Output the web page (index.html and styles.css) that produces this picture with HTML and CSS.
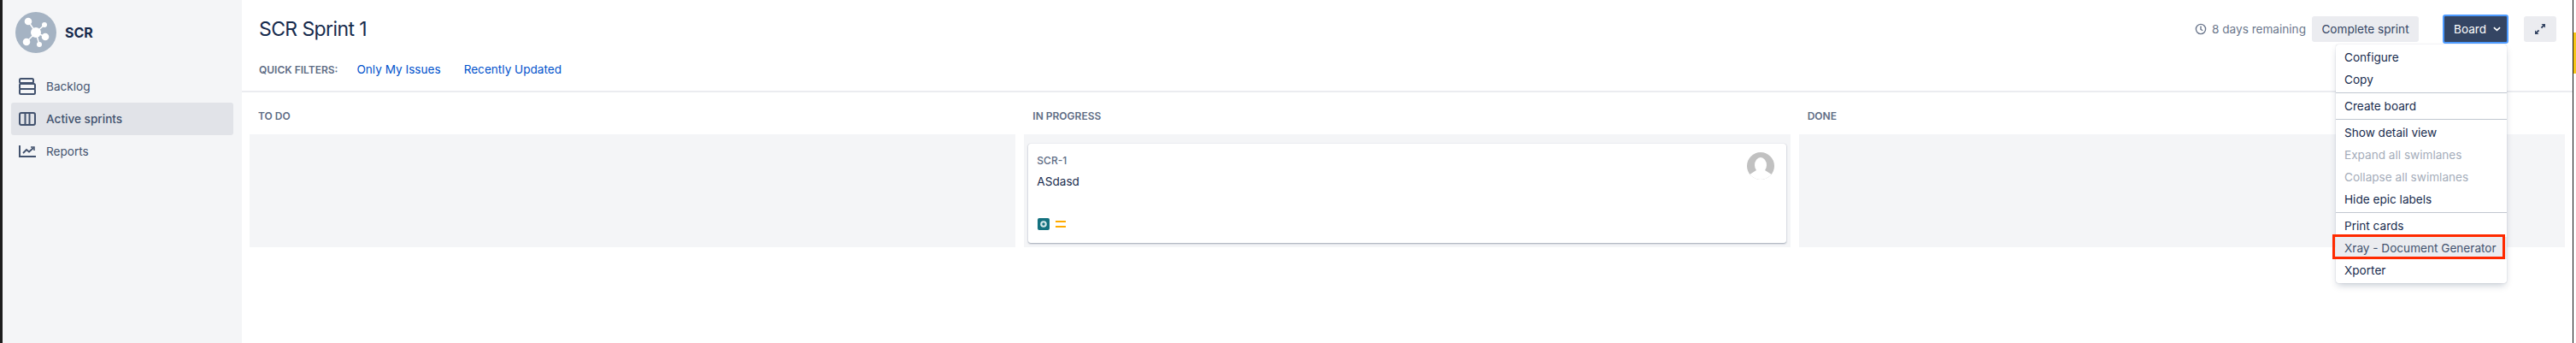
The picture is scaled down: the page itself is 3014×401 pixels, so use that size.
FILE: index.html
```html
<!DOCTYPE html>
<html lang="en">
<head>
    <meta charset="UTF-8">
    <title>SCR Sprint 1</title>
    <link rel="stylesheet" href="styles.css">
</head>
<body>
    <div class="edge-left"></div>

    <div class="sidebar">
        <div class="project">
            <svg class="project-avatar" viewBox="0 0 48 48">
                <circle cx="24" cy="24" r="24" fill="#a5b3c3"/>
                <g stroke="#fff" stroke-width="1.5">
                    <line x1="24" y1="24" x2="15" y2="11"/>
                    <line x1="24" y1="24" x2="34" y2="15"/>
                    <line x1="24" y1="24" x2="35" y2="29"/>
                    <line x1="24" y1="24" x2="13" y2="35"/>
                    <line x1="24" y1="24" x2="28" y2="38"/>
                </g>
                <g fill="#fff">
                    <circle cx="24" cy="24" r="6"/>
                    <circle cx="15" cy="11" r="4.3"/>
                    <circle cx="34" cy="15" r="3"/>
                    <circle cx="35" cy="29" r="4.3"/>
                    <circle cx="13" cy="35" r="4.3"/>
                    <circle cx="28" cy="38" r="3"/>
                </g>
            </svg>
            <span class="project-name">SCR</span>
        </div>
        <div class="nav">
            <div class="nav-item">
                <svg class="nav-icon" viewBox="0 0 20 20" fill="none" stroke="#42526e" stroke-width="2">
                    <rect x="1" y="1" width="16" height="5" rx="1.5"/>
                    <rect x="1" y="7" width="18" height="6" rx="1.5"/>
                    <rect x="1" y="13" width="18" height="6" rx="1.5"/>
                </svg>
                Backlog
            </div>
            <div class="nav-item active">
                <svg class="nav-icon" viewBox="0 0 20 20" fill="none" stroke="#42526e" stroke-width="2">
                    <rect x="1" y="3" width="18" height="14" rx="2"/>
                    <line x1="7.500" y1="3" x2="7.500" y2="17"/>
                    <line x1="12.500" y1="3" x2="12.500" y2="17"/>
                </svg>
                Active sprints
            </div>
            <div class="nav-item">
                <svg class="nav-icon" viewBox="0 0 20 20" fill="none" stroke="#42526e" stroke-width="2">
                    <path d="M1 3v13h19"/>
                    <path d="M5 12l4-4 3 2.500 5-4.500" stroke-width="1.800"/>
                    <path d="M14 5h4v4" stroke-width="1.500"/>
                </svg>
                Reports
            </div>
        </div>
    </div>

    <div class="main">
        <div class="header">
            <div class="header-top">
                <h1 class="title">SCR Sprint 1</h1>
                <div class="tools">
                    <svg class="clock" viewBox="0 0 16 16" fill="none" stroke="#6b778c" stroke-width="1.600">
                        <circle cx="8" cy="8" r="6.400"/>
                        <path d="M8 4v4.300l2.600 1.700"/>
                    </svg>
                    <span class="remaining">8 days remaining</span>
                    <button class="btn complete">Complete sprint</button>
                    <div class="board-menu">
                        <button class="btn board">
                            Board
                            <svg class="chevron" viewBox="0 0 10 6" fill="none" stroke="#fff" stroke-width="1.800">
                                <path d="M1 1l4 3.600 4-3.600"/>
                            </svg>
                        </button>
                        <div class="dropdown">
                            <div class="section">
                                <div class="item">Configure</div>
                                <div class="item">Copy</div>
                            </div>
                            <div class="section">
                                <div class="item">Create board</div>
                            </div>
                            <div class="section">
                                <div class="item">Show detail view</div>
                                <div class="item disabled">Expand all swimlanes</div>
                                <div class="item disabled">Collapse all swimlanes</div>
                                <div class="item">Hide epic labels</div>
                            </div>
                            <div class="section">
                                <div class="item">Print cards</div>
                                <div class="item marked">Xray - Document Generator</div>
                                <div class="item">Xporter</div>
                            </div>
                        </div>
                    </div>
                    <button class="btn expand">
                        <svg viewBox="0 0 14 14" width="14" height="14" fill="#344563">
                            <path d="M8.500 1H13v4.500l-1.600-1.600-2.300 2.300-1.300-1.300 2.300-2.300z"/>
                            <path d="M5.500 13H1V8.500l1.600 1.600 2.300-2.300 1.300 1.300-2.300 2.300z"/>
                        </svg>
                    </button>
                </div>
            </div>
            <div class="filters">
                <span class="filters-label">QUICK FILTERS:</span>
                <a class="filter">Only My Issues</a>
                <a class="filter">Recently Updated</a>
            </div>
        </div>

        <div class="board-grid">
            <div class="column">
                <div class="column-name">TO DO</div>
                <div class="pool"></div>
            </div>
            <div class="column">
                <div class="column-name">IN PROGRESS</div>
                <div class="pool">
                    <div class="card">
                        <div class="card-body">
                            <div class="card-key">SCR-1</div>
                            <div class="card-summary">ASdasd</div>
                            <div class="card-icons">
                                <svg class="type-icon" viewBox="0 0 14 14">
                                    <rect width="14" height="14" rx="2" fill="#14717f"/>
                                    <circle cx="7" cy="7" r="3.800" fill="#d5e8ea"/>
                                    <circle cx="7" cy="7" r="1.700" fill="#14717f"/>
                                </svg>
                                <div class="priority"></div>
                            </div>
                        </div>
                        <svg class="assignee" viewBox="0 0 32 32">
                            <defs>
                                <clipPath id="avatar-clip"><circle cx="16" cy="16" r="16"/></clipPath>
                            </defs>
                            <g clip-path="url(#avatar-clip)">
                                <rect width="32" height="32" fill="#c1c1c1"/>
                                <ellipse cx="16" cy="15" rx="7" ry="9" fill="#fff"/>
                                <path d="M0 32v-4l11-7h10l11 7v4z" fill="#fff"/>
                            </g>
                        </svg>
                    </div>
                </div>
            </div>
            <div class="column">
                <div class="column-name">DONE</div>
                <div class="pool"></div>
            </div>
        </div>
    </div>

    <div class="edge-right">
        <div class="edge-line"></div>
        <div class="edge-rest">
            <div class="edge-tab"></div>
        </div>
    </div>
</body>
</html>
```

FILE: styles.css
```css
html, body {
    margin: 0;
    padding: 0;
    height: 401px;
    overflow: hidden;
}
body {
    display: flex;
    font-family: Inter, "Noto Sans", sans-serif;
    font-size: 13.6px;
    color: #172b4d;
    background-color: #fff;
}
.edge-left {
    width: 3px;
    background-color: #1d1d1d;
}
.edge-right {
    width: 4px;
    display: flex;
}
.edge-line {
    width: 1px;
    background-color: #111;
}
.edge-rest {
    flex: 1;
    padding-top: 38px;
}
.edge-tab {
    height: 48px;
    background-color: #f5c518;
}
.sidebar {
    width: 280px;
    background-color: #f4f5f7;
    box-sizing: border-box;
    padding: 14px 10px 0;
}
.project {
    display: flex;
    align-items: center;
    gap: 10px;
    padding-left: 5px;
    height: 48px;
}
.project-avatar {
    width: 48px;
    height: 48px;
}
.project-name {
    font-size: 16px;
    font-weight: 700;
}
.nav {
    margin-top: 20px;
}
.nav-item {
    display: flex;
    align-items: center;
    gap: 12px;
    height: 38px;
    padding-left: 9px;
    color: #42526e;
    border-radius: 3px;
}
.nav-item.active {
    background-color: #e1e3e8;
    font-weight: 500;
}
.nav-icon {
    width: 20px;
    height: 20px;
}
.main {
    flex: 1;
    min-width: 0;
}
.header {
    height: 108px;
    box-sizing: border-box;
    border-bottom: 2px solid #ebecf0;
    padding: 17px 19px 0 20px;
}
.header-top {
    display: flex;
    justify-content: space-between;
    align-items: center;
    height: 34px;
}
.title {
    margin: 0;
    font-size: 23px;
    font-weight: 400;
    letter-spacing: -0.6px;
}
.tools {
    display: flex;
    align-items: center;
}
.clock {
    width: 14px;
    height: 14px;
    margin-right: 6px;
}
.remaining {
    color: #6b778c;
    margin-right: 7px;
}
.btn {
    font-family: inherit;
    font-size: 13.6px;
    height: 30px;
    border: none;
    border-radius: 3px;
    background-color: #ebecf0;
    color: #344563;
    padding: 0 11px;
    white-space: nowrap;
}
.complete {
    width: 125px;
    padding: 0;
}
.board-menu {
    position: relative;
    margin: 0 18px 0 28px;
}
.board {
    display: flex;
    align-items: center;
    gap: 8px;
    width: 77px;
    height: 34px;
    box-sizing: border-box;
    padding: 0 0 0 11px;
    border: 2px solid #4c9aff;
    background-color: #344563;
    color: #fff;
}
.chevron {
    width: 9px;
    height: 6px;
}
.expand {
    width: 38px;
    display: flex;
    align-items: center;
    justify-content: center;
    padding: 0;
}
.dropdown {
    position: absolute;
    top: 35px;
    right: 2px;
    width: 200px;
    background-color: #fff;
    border-radius: 3px;
    box-shadow: 0 4px 8px -2px rgba(9, 30, 66, 0.25), 0 0 1px rgba(9, 30, 66, 0.31);
    z-index: 5;
}
.section {
    padding: 2px 0;
}
.section + .section {
    border-top: 1px solid #c1c7d0;
}
.item {
    position: relative;
    height: 26px;
    line-height: 26px;
    padding-left: 10px;
    white-space: nowrap;
}
.item.disabled {
    color: #a5adba;
}
.item.marked {
    background-color: #ebecf0;
    color: #42526e;
}
.item.marked::after {
    content: "";
    position: absolute;
    top: -3px;
    bottom: 0;
    left: -4px;
    right: 2px;
    border: 3px solid #ff2a00;
}
.filters {
    display: flex;
    align-items: center;
    margin-top: 20px;
    height: 20px;
}
.filters-label {
    font-size: 12px;
    font-weight: 600;
    color: #5e6c84;
    margin-right: 22px;
}
.filter {
    color: #0052cc;
    margin-right: 27px;
}
.board-grid {
    display: grid;
    grid-template-columns: repeat(3, 1fr);
    gap: 10px;
    padding: 0 9px;
}
.column-name {
    height: 49px;
    line-height: 55px;
    padding-left: 10px;
    font-size: 12px;
    font-weight: 600;
    color: #5e6c84;
}
.pool {
    height: 132px;
    box-sizing: border-box;
    padding: 11px 5px 5px;
    background-color: #f4f5f7;
}
.card {
    display: flex;
    justify-content: space-between;
    height: 116px;
    box-sizing: border-box;
    padding: 10px 14px 0 10px;
    background-color: #fff;
    border-radius: 3px;
    box-shadow: 0 1px 2px rgba(9, 30, 66, 0.35), 0 0 1px rgba(9, 30, 66, 0.2);
}
.card-key {
    font-size: 12px;
    font-weight: 500;
    color: #5e6c84;
    line-height: 20px;
}
.card-summary {
    margin-top: 4px;
    line-height: 20px;
}
.card-icons {
    display: flex;
    align-items: center;
    gap: 7px;
    margin-top: 33px;
    padding-left: 1px;
}
.type-icon {
    width: 14px;
    height: 14px;
}
.priority {
    width: 12px;
    height: 4px;
    border-top: 2px solid #ffab00;
    border-bottom: 2px solid #ffab00;
}
.assignee {
    width: 32px;
    height: 32px;
}
```
